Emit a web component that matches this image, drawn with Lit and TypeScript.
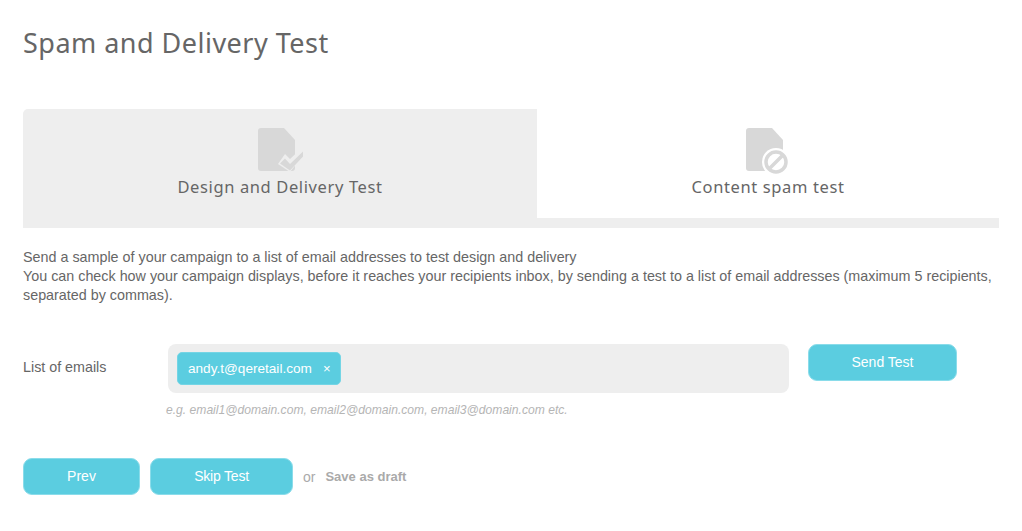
import { LitElement, html, css } from "lit";
import { customElement } from "lit/decorators.js";

@customElement("app-root")
export class AppRoot extends LitElement {
  static styles = css`
    :host { display: block; width: 1022px; height: 531px; overflow: hidden; background: #fff; font-family: "Liberation Sans", Arial, sans-serif; color: #666; box-sizing: border-box; padding: 0 23px; }
    h1 { margin: 0; padding-top: 26px; height: 109px; box-sizing: border-box; font: 400 27px/34px "Noto Sans", sans-serif; color: #666; letter-spacing: 0.48px; }
    .tabs { display: flex; width: 976px; height: 119px; background: #eee; border-radius: 5px 5px 0 0; }
    .tab { flex: none; display: flex; flex-direction: column; align-items: center; padding-top: 19px; box-sizing: border-box; font: 400 16.5px/22px "Noto Sans", sans-serif; letter-spacing: 0.62px; color: #666; }
    .tab svg { display: block; margin: 0 0 2px 2px; }
    .tab.active { width: 514px; }
    .tab.idle { width: 462px; height: 109px; background: #fff; }
    .intro { margin: 20px 0 0; font-size: 14.33px; line-height: 19px; height: 56px; color: #666; }
    .form { display: flex; align-items: flex-start; margin-top: 40px; }
    .label { width: 145px; font-size: 14.3px; line-height: 16px; margin-top: 15px; flex: none; }
    .field { width: 621px; height: 49px; background: #eee; border-radius: 8px; flex: none; box-sizing: border-box; padding: 8px 9px; }
    .chip { display: inline-flex; align-items: center; height: 33px; width: 164px; box-sizing: border-box; padding: 0 0 1px 10px; background: #5bcde0; border: 1px solid #74d5e5; border-radius: 5px; color: #fff; font-size: 13.6px; }
    .chip span { margin-left: 11px; font-size: 13px; }
    .btn { display: flex; align-items: center; justify-content: center; height: 37px; box-sizing: border-box; padding-bottom: 2px; background: #5bcde0; border: 1px solid #8adcea; border-radius: 9px; color: #fff; font-size: 14px; flex: none; }
    .send { width: 149px; margin-left: 19px; }
    .hint { margin: 9px 0 0 143px; font-size: 12.12px; line-height: 16px; font-style: italic; color: #b5b5b5; }
    .actions { display: flex; align-items: center; margin-top: 40px; font-size: 14px; }
    .prev { width: 117px; }
    .skip { width: 143px; margin-left: 10px; letter-spacing: -0.2px; }
    .or { margin-left: 10px; color: #aaa; }
    .draft { margin-left: 10px; font-size: 13px; font-weight: 700; color: #aaa; }
  `;

  render() {
    return html`
      <h1>Spam and Delivery Test</h1>
      <div class="tabs">
        <div class="tab active">
          <svg width="46" height="46" viewBox="0 0 46 46">
            <path d="M3 0H26L37 12V40a3 3 0 0 1-3 3H3a3 3 0 0 1-3-3V3a3 3 0 0 1 3-3Z" fill="#d8d8d8"/>
            <path d="M20 36L32 44L46 26V18L32 31L27 26Z" fill="#eee"/>
            <path d="M22 35.500L27 30.500L32 36L45 23.500V28.500L32 42.500Z" fill="#d8d8d8"/>
          </svg>
          Design and Delivery Test
        </div>
        <div class="tab idle">
          <svg width="46" height="46" viewBox="0 0 46 46">
            <path d="M3 0H26L37 12V40a3 3 0 0 1-3 3H3a3 3 0 0 1-3-3V3a3 3 0 0 1 3-3Z" fill="#d8d8d8"/>
            <circle cx="30" cy="34" r="14" fill="#fff"/>
            <circle cx="30" cy="34" r="10" fill="none" stroke="#d8d8d8" stroke-width="3.500"/>
            <path d="M23 41L37 27" stroke="#d8d8d8" stroke-width="3.500"/>
          </svg>
          Content spam test
        </div>
      </div>
      <p class="intro">Send a sample of your campaign to a list of email addresses to test design and delivery<br>You can check how your campaign displays, before it reaches your recipients inbox, by sending a test to a list of email addresses (maximum 5 recipients, separated by commas).</p>
      <div class="form">
        <div class="label">List of emails</div>
        <div class="field"><div class="chip">andy.t@qeretail.com<span>×</span></div></div>
        <div class="btn send">Send Test</div>
      </div>
      <div class="hint">e.g. email1@domain.com, email2@domain.com, email3@domain.com etc.</div>
      <div class="actions">
        <div class="btn prev">Prev</div>
        <div class="btn skip">Skip Test</div>
        <span class="or">or</span>
        <span class="draft">Save as draft</span>
      </div>
    `;
  }
}
